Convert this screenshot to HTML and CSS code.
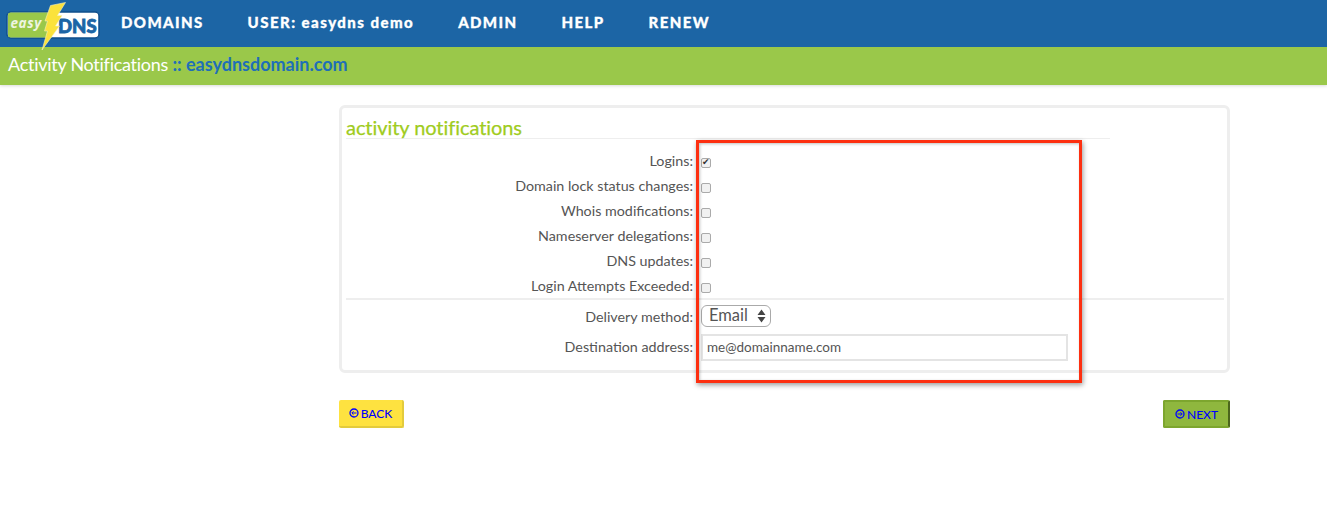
FILE: index.html
```html
<!DOCTYPE html>
<html lang="en">
<head>
<meta charset="utf-8">
<title>Activity Notifications</title>
<link rel="stylesheet" href="styles.css">
</head>
<body>
<header class="topbar">
  <svg class="logo" width="102" height="53" viewBox="0 0 102 53">
    <rect x="7" y="12" width="92" height="26" rx="4" fill="#fff" stroke="#0f4f8c" stroke-width="1.500"/>
    <path d="M8 15a2.500 2.500 0 0 1 2.500-2.500H52V37.500H10.500A2.500 2.500 0 0 1 8 35z" fill="#9ac84a"/>
    <text x="10.500" y="28" class="logo-easy">easy</text>
    <text x="58" y="33" class="logo-dns">DNS</text>
    <path d="M50.500 5.500L65.500 2.500L57.500 15.500L62 15.500L55.500 26L59.500 26L42 50L47.500 31L44.500 31L47.500 21L45 21Z" fill="#fbe23c" stroke="#f5f0c0" stroke-width=".6"/>
  </svg>
  <nav class="nav">
    <a>DOMAINS</a>
    <a class="nav-user">USER: easydns demo</a>
    <a>ADMIN</a>
    <a>HELP</a>
    <a>RENEW</a>
  </nav>
</header>
<div class="subbar">Activity Notifications <span class="sep">::</span> <span class="domain">easydnsdomain.com</span></div>
<main class="main">
  <section class="panel">
    <h2 class="title">activity notifications</h2>
    <div class="row"><label>Logins:</label><input type="checkbox" checked></div>
    <div class="row"><label>Domain lock status changes:</label><input type="checkbox"></div>
    <div class="row"><label>Whois modifications:</label><input type="checkbox"></div>
    <div class="row"><label>Nameserver delegations:</label><input type="checkbox"></div>
    <div class="row"><label>DNS updates:</label><input type="checkbox"></div>
    <div class="row"><label>Login Attempts Exceeded:</label><input type="checkbox"></div>
    <div class="row row-method"><label>Delivery method:</label>
      <span class="select">Email
        <svg width="9" height="14" viewBox="0 0 9 14"><path d="M4.500 0.500L8.500 6H.5zM4.500 13.500L.5 8H8.500z" fill="#444"/></svg>
      </span>
    </div>
    <div class="row row-dest"><label>Destination address:</label><input class="address" type="text" value="me@domainname.com"></div>
  </section>
  <div class="actions">
    <a class="btn btn-back"><svg width="10" height="10" viewBox="0 0 10 10"><circle cx="5" cy="5" r="4" fill="none" stroke="#00f" stroke-width="1.300"/><path d="M7.500 5H3M4.500 3.300L2.800 5l1.700 1.700" fill="none" stroke="#00f"/></svg>BACK</a>
    <a class="btn btn-next"><svg width="10" height="10" viewBox="0 0 10 10"><circle cx="5" cy="5" r="4" fill="none" stroke="#00f" stroke-width="1.300"/><path d="M2.500 5H7M5.500 3.300L7.200 5 5.500 6.700" fill="none" stroke="#00f"/></svg>NEXT</a>
  </div>
</main>
<div class="callout"></div>
</body>
</html>
```
FILE: styles.css
```css
* { box-sizing: border-box; }
html, body { margin: 0; height: 100%; }
body { background: #fff; font-family: Lato, "Open Sans", sans-serif; color: #555; overflow: hidden; position: relative; }

.topbar { height: 47px; background: #1c65a5; display: flex; align-items: flex-start; position: relative; z-index: 2; }
.logo { position: absolute; left: 0; top: 0; }
.logo-easy { font: italic 700 13.500px "Open Sans", sans-serif; fill: #eef5e0; letter-spacing: .6px; }
.logo-dns { font-family: Lato, sans-serif; font-weight: 900; font-size: 18.500px; fill: #1c65a5; stroke: #1c65a5; stroke-width: .8px; }
.nav { display: flex; gap: 44px; margin-left: 121px; padding-top: 13px; font-weight: 900; font-size: 15px; line-height: 18px; letter-spacing: 1.400px; color: #fff; -webkit-text-stroke: .3px #fff; }
.nav-user { letter-spacing: 1.450px; }

.subbar { height: 38px; background: #9ac84a; box-shadow: 0 1px 3px rgba(0,0,0,.15); padding: 6px 0 0 8px; font-size: 18px; line-height: 22px; letter-spacing: -.27px; color: #fff; }
.sep, .domain { color: #1f6fb8; font-weight: 700; letter-spacing: 0; }

.main { width: 891px; margin: 20px 0 0 339px; }
.panel { height: 268px; border: 3px solid #eee; border-radius: 6px; padding: 6px 3px 0 4px; }
.title { width: 764px; margin: 0 0 10px; height: 25px; padding-top: 2px; border-bottom: 1px solid #eee; font-size: 20px; line-height: 23px; font-weight: 400; color: #9fcc1e; letter-spacing: -.06px; -webkit-text-stroke: .25px #9fcc1e; }
.row { display: flex; align-items: center; height: 25px; font-size: 14.300px; line-height: 23px; }
.row label { width: 347px; text-align: right; padding-bottom: 2px; }
.row input[type=checkbox] { appearance: none; position: relative; width: 10px; height: 10px; margin: 3px 0 0 8px; border: 1px solid #aaa; border-radius: 2px; background: #f1f1f1; }
.row input[type=checkbox]:checked::after { content: "✔"; position: absolute; left: 0; top: -2px; font: 9px/11px "DejaVu Sans", sans-serif; color: #333; }
.row-method { height: 35px; margin-top: -1px; border-top: 2px solid #eee; }
.row-method label { padding-bottom: 0; }
.row-dest { height: 28px; }
.select { display: flex; align-items: center; justify-content: space-between; width: 70px; height: 22px; margin: 0 0 2px 8px; padding: 0 4px 0 7px; border: 1px solid #aaa; border-radius: 6px; font-size: 16.500px; color: #555; background: #fff; }
.address { width: 367px; height: 27px; margin-left: 8px; padding: 0 4px; border: 2px solid #e4e4e4; font: 13.500px Lato, sans-serif; color: #555; outline: 0; }

.actions { display: flex; justify-content: space-between; margin-top: 27px; }
.btn { display: flex; align-items: center; justify-content: center; gap: 2px; height: 28px; border-radius: 2px; font-size: 12px; font-weight: 500; color: #00f; }
.btn-back { width: 65px; background: #fee240; border-right: 2px solid #e3cb3c; border-bottom: 2px solid #e3cb3c; }
.btn-next { width: 67px; background: #8fb73e; border: 2px solid #7da62e; border-right-color: #4b651c; }

.callout { position: absolute; left: 696px; top: 140px; width: 386px; height: 243px; border: 3px solid #fd2f10; box-shadow: 1px 2px 5px rgba(0,0,0,.4), inset 1px 1px 3px rgba(0,0,0,.25); }
```
